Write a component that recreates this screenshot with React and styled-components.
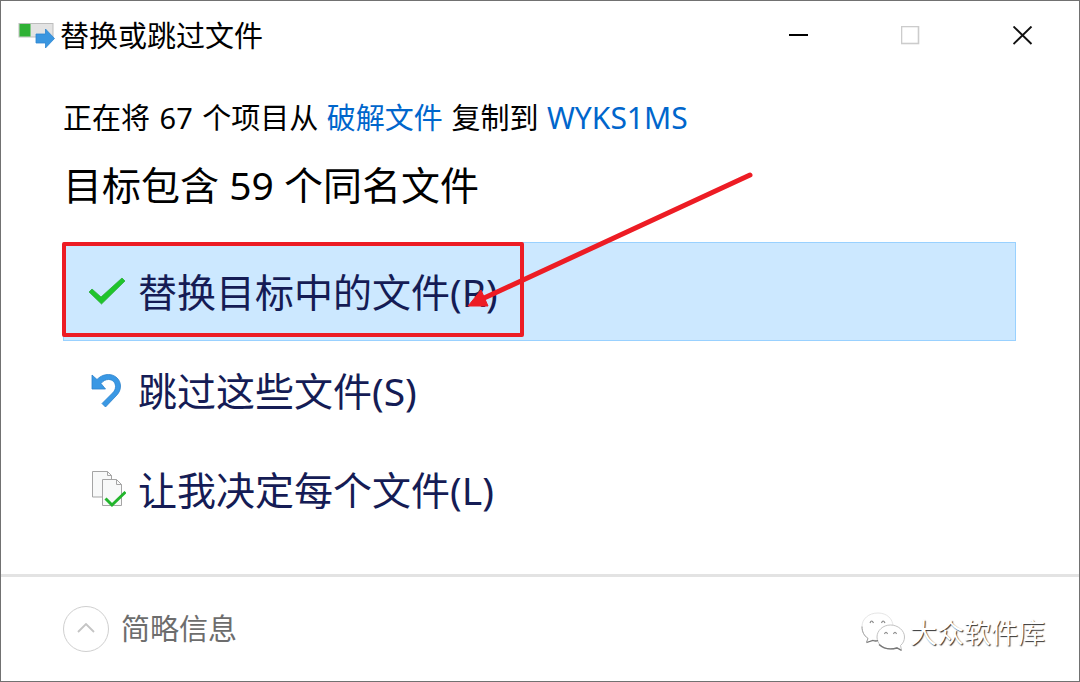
import styled, { createGlobalStyle } from 'styled-components'

const App = () => {
    return (
        <Window>
            <GlobalStyle />
            <TitleBar>
                <CopyIcon />
                <Title>替换或跳过文件</Title>
                <WindowButton aria-label="最小化">
                    <svg width="20" height="20" viewBox="0 0 20 20">
                        <path d="M0 9H19" stroke="#000" strokeWidth="2" />
                    </svg>
                </WindowButton>
                <WindowButton aria-label="最大化" disabled>
                    <svg width="20" height="20" viewBox="0 0 20 20">
                        <rect x="0.5" y="0.5" width="17" height="17" fill="none" stroke="#ccc" strokeWidth="1.6" />
                    </svg>
                </WindowButton>
                <WindowButton aria-label="关闭">
                    <svg width="20" height="20" viewBox="0 0 20 20">
                        <path d="M0.500 0.500L18.500 18M18.500 0.500L0.500 18" stroke="#111" strokeWidth="1.9" />
                    </svg>
                </WindowButton>
            </TitleBar>
            <Content>
                <Summary>
                    正在将 <Count>67</Count> 个项目从 <Folder href="#source">破解文件</Folder> 复制到 <Folder href="#target" $large>WYKS1MS</Folder>
                </Summary>
                <Question>目标包含 59 个同名文件</Question>
                <Options>
                    <Option $selected>
                        <CheckIcon />
                        替换目标中的文件(R)
                        <Marker />
                        <Arrow />
                    </Option>
                    <Option>
                        <UndoIcon />
                        跳过这些文件(S)
                    </Option>
                    <Option>
                        <FilesIcon />
                        让我决定每个文件(L)
                    </Option>
                </Options>
            </Content>
            <Footer>
                <Details>
                    <Circle>
                        <svg width="18" height="12" viewBox="0 0 18 12">
                            <path d="M1 9L9 1L17 9" fill="none" stroke="#c4c4c4" strokeWidth="1.8" />
                        </svg>
                    </Circle>
                    简略信息
                </Details>
                <Watermark>
                    <WechatIcon />
                    大众软件库
                </Watermark>
            </Footer>
        </Window>
    )
}

const CopyIcon = () => (
    <svg width="37" height="26" viewBox="0 0 37 26">
        <rect x="1" y="0.5" width="34" height="13.5" fill="#e3e3e3" stroke="#bdbdbd" />
        <rect x="1.5" y="1" width="11" height="12.5" fill="#2fb135" />
        <path d="M18 11H27.500V6L36.500 15.500L27.500 25V20H18Z" fill="#3a96e0" stroke="#2f86d0" strokeWidth="0.8" />
    </svg>
)

const CheckIcon = () => (
    <svg width="38" height="38" viewBox="0 0 38 38">
        <path d="M1 19L4 16L13 24L34 5L37 8L13.500 31Z" fill="#1fc52b" stroke="#2cab3b" strokeWidth="0.8" />
    </svg>
)

const UndoIcon = () => (
    <svg width="38" height="38" viewBox="-1 0 38 38">
        <path
            d="M3 3L8 7.500C12 3.500 16 2.500 19.500 2.500C26 2.500 31.500 7.500 31.500 14C31.500 18 30 21 27 24L16.500 35L13 31.500L23.500 21C25.500 19 26.500 17 26.500 14.500C26.500 10.500 23.500 7.500 19.500 7.500C16.500 7.500 14 9 12 11.500L16.500 17H3Z"
            fill="#3a98e4"
            stroke="#2b82cb"
            strokeWidth="0.8"
        />
    </svg>
)

const FilesIcon = () => (
    <svg width="38" height="38" viewBox="-1 1 38 38">
        <path d="M3.500 1.500H18.500L22.500 5.500V27H3.500Z" fill="#f8f9f9" stroke="#a5a5a5" />
        <path d="M18.500 1.500V5.500H22.500" fill="none" stroke="#a5a5a5" />
        <path d="M13.500 9.500H27.500L32.500 14.500V35.500H13.500Z" fill="#f8f9f9" stroke="#a5a5a5" />
        <path d="M27.500 9.500V14.500H32.500" fill="none" stroke="#a5a5a5" />
        <path d="M16.500 28.500L23 35L36.500 22" fill="none" stroke="#22b52c" strokeWidth="3" />
    </svg>
)

const WechatIcon = () => (
    <svg width="44" height="42" viewBox="0 0 44 42">
        <g fill="#fff" stroke="#bbb" strokeWidth="0.9">
            <path d="M17 1C7.500 1 1 7 1 14.500C1 20 3 23.500 7 26.500L5.500 31L12 28C24 31 32 24 32 14.500C32 7 26 1 17 1Z" stroke="#e2e2e2" />
            <path d="M1 14.500C1 20 3 23.500 7 26.500L5.500 30" fill="none" stroke="#999" />
            <path d="M29.500 13C22 13 16 18.500 16 25C16 32 22 37 29.500 37C32 37 34 36.500 36 35.500L40.500 38L39.500 33.500C42 31.500 43.500 28.500 43.500 25C43.500 18.500 37 13 29.500 13Z" />
        </g>
        <g fill="none" stroke="#8a8a8a" strokeWidth="1.2">
            <path d="M9 11Q10.500 7 12.500 11M20.500 11Q22 7 24 11" />
            <path d="M23.500 22Q25 18.500 26.500 22M32.500 22Q34 18.500 35.500 22" />
        </g>
        <path d="M5.500 30.500L12 28.500Q15 29.500 17 28.500M18 32.500Q25 39 36 36L40.500 38.500" fill="none" stroke="#777" strokeWidth="1.3" />
    </svg>
)

const Arrow = () => (
    <ArrowLayer width="292" height="140" viewBox="0 0 292 140">
        <path d="M286 5L18 129" stroke="#ed1c24" strokeWidth="5" strokeLinecap="round" />
        <path d="M4 136L17 120L24 136Z" fill="#ed1c24" stroke="#ed1c24" />
    </ArrowLayer>
)

const GlobalStyle = createGlobalStyle`
    *{
        box-sizing: border-box;
    }
    body{
        margin: 0;
        background-color: #fff;
    }
    svg{
        display: block;
        flex-shrink: 0;
    }
    button{
        padding: 0;
        border: none;
        background: none;
        font: inherit;
        color: inherit;
    }
`

const Window = styled.div`
    min-height: 100vh;
    display: flex;
    flex-direction: column;
    border: 1px solid #717171;
    background-color: #fff;
    color: #000;
    font-family: "Noto Sans", "Noto Sans CJK SC", sans-serif;
    font-size: 29px;
    line-height: 40px;
`

const TitleBar = styled.header`
    height: 70px;
    display: flex;
    align-items: center;
    padding-left: 17px;
`

const Title = styled.h1`
    flex: 1;
    margin: 0;
    padding-left: 5px;
    font-size: 29px;
    font-weight: 400;
`

const WindowButton = styled.button`
    width: 112px;
    height: 100%;
    display: flex;
    align-items: center;
    justify-content: center;
`

const Content = styled.main`
    flex: 1;
    padding: 27px 63px 0 62px;
`

const Summary = styled.p`
    margin: 0;
`

const Count = styled.span`
    margin: 0 2px;
`

const Folder = styled.a`
    margin: 0 1px;
    color: #0066cc;
    font-size: ${(props) => (props.$large ? '30px' : '29px')};
    line-height: 1;
    text-decoration: none;
`

const Question = styled.h2`
    margin: 19px 0 0;
    font-size: 39px;
    font-weight: 400;
    line-height: 56px;
`

const Options = styled.div`
    display: flex;
    flex-direction: column;
    margin-top: 29px;
`

const Option = styled.button`
    position: relative;
    height: 99px;
    display: flex;
    align-items: center;
    gap: 12px;
    && {
        padding: 0 24px;
        border: 1px solid ${(props) => (props.$selected ? '#99d1ff' : 'transparent')};
        background-color: ${(props) => (props.$selected ? '#cce8ff' : 'transparent')};
        color: #151c55;
        font-size: 39px;
    }
`

// marca vermelha em volta da primeira opção
const Marker = styled.span`
    position: absolute;
    top: -1px;
    left: -2px;
    width: 462px;
    height: 95px;
    border: 4px solid #ed1c24;
    border-radius: 2px;
`

const ArrowLayer = styled.svg`
    position: absolute;
    left: 400px;
    bottom: 30px;
`

const Footer = styled.footer`
    height: 107px;
    display: flex;
    align-items: center;
    justify-content: space-between;
    padding: 0 34px 0 62px;
    border-top: 3px solid #e3e3e3;
`

const Details = styled.button`
    display: flex;
    align-items: center;
    gap: 12px;
    && {
        color: #6d6d6d;
    }
`

const Circle = styled.span`
    width: 46px;
    height: 46px;
    display: flex;
    align-items: center;
    justify-content: center;
    border: 1px solid #cfcfcf;
    border-radius: 50%;
`

const Watermark = styled.div`
    display: flex;
    align-items: center;
    gap: 5px;
    padding-top: 8px;
    color: #fff;
    font-size: 27px;
    text-shadow: 1px 1px 1px #333;
`

export default App
